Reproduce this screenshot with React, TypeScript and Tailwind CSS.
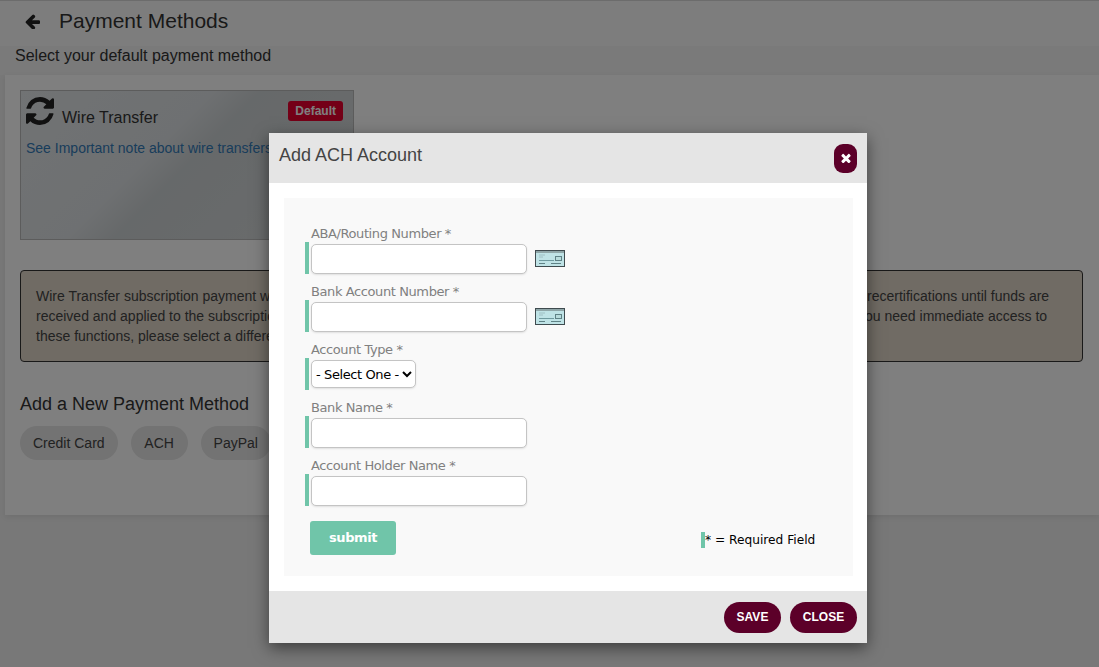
const labelFont = "font-['DejaVu_Sans',sans-serif]"

// Font Awesome 4 glyphs, the thicker shapes the page uses
function ArrowLeftIcon() {
  return (
    <svg viewBox="128 128 1536 1536" className="h-[15px] w-[15px] fill-[#222]">
      <path d="M1664 896v128q0 53-32.5 90.5t-84.5 37.5h-704l293 294q38 36 38 90t-38 90l-75 76q-37 37-90 37-52 0-91-37l-651-652q-37-37-37-90 0-52 37-91l651-650q38-38 91-38 52 0 90 38l75 74q38 38 38 91t-38 91l-293 293h704q52 0 84.5 37.5t32.5 90.5z" />
    </svg>
  )
}

function RefreshIcon() {
  return (
    <svg viewBox="128 128 1536 1536" className="h-7 w-7 shrink-0 fill-[#222]">
      <path d="M1639 1056q0 5-1 7-64 268-268 434.5t-478 166.5q-146 0-282.5-55t-243.5-157l-129 129q-19 19-45 19t-45-19-19-45v-448q0-26 19-45t45-19h448q26 0 45 19t19 45-19 45l-137 137q71 66 161 102t187 36q134 0 250-65t186-179q11-17 53-117 8-23 30-23h192q13 0 22.5 9.5t9.5 22.5zm25-800v448q0 26-19 45t-45 19h-448q-26 0-45-19t-19-45 19-45l138-138q-148-137-349-137-134 0-250 65t-186 179q-11 17-53 117-8 23-30 23h-199q-13 0-22.5-9.5t-9.5-22.5v-7q65-268 270-434.5t480-166.5q146 0 284 55.5t245 156.5l130-129q19-19 45-19t45 19 19 45z" />
    </svg>
  )
}

function TimesIcon() {
  return (
    <svg viewBox="256 256 1280 1280" className="h-2.5 w-2.5 fill-white">
      <path d="M1490 1322q0 40-28 68l-136 136q-28 28-68 28t-68-28l-294-294-294 294q-28 28-68 28t-68-28l-136-136q-28-28-28-68t28-68l294-294-294-294q-28-28-28-68t28-68l136-136q28-28 68-28t68 28l294 294 294-294q28-28 68-28t68 28l136 136q28 28 28 68t-28 68l-294 294 294 294q28 28 28 68z" />
    </svg>
  )
}

// little cheque picture next to the routing fields
function ChequeIcon() {
  return (
    <svg width="30" height="17" viewBox="0 0 30 17" className="ml-2 mt-2 shrink-0">
      <rect x="0.5" y="0.5" width="29" height="16" fill="#bfe3e6" stroke="#3f4b4f" />
      <rect x="1" y="1" width="28" height="2" fill="#8fa6a8" />
      <path d="M4 5h6M4 7h4" stroke="#9fc0c4" strokeWidth="1" />
      <path d="M4 10.5h15" stroke="#6f9a9f" strokeWidth="1" />
      <rect x="20.5" y="6.5" width="6" height="4" fill="#b8dcdc" stroke="#5f8286" />
      <path d="M4 13.5h6M16 13.5h10" stroke="#5f8286" strokeWidth="1" />
    </svg>
  )
}

function Label({ text }: { text: string }) {
  return (
    <div className={`${labelFont} ml-[27px] h-5 pt-1 text-[13px] leading-4 tracking-[-0.4px] text-[#808080]`}>{text}</div>
  )
}

function Field({ label, cheque }: { label: string; cheque?: boolean }) {
  return (
    <div className="h-[58px]">
      <Label text={label} />
      <div className="flex items-start">
        <div className="ml-[21px] h-8 w-1 bg-[#70c5a9]" />
        <input
          type="text"
          className="ml-0.5 mt-[2px] h-[30px] w-[216px] rounded-[5px] border border-[#c4c4c4] bg-white shadow-[0_1px_2px_rgba(0,0,0,0.1)]"
        />
        {cheque && <ChequeIcon />}
      </div>
    </div>
  )
}

export default function App() {
  return (
    <div className="relative h-[667px] w-[1099px] overflow-hidden bg-[#f0f0f0] font-['Liberation_Sans',sans-serif]">
      {/* page behind the dialog */}
      <div className="h-[52px] border-t border-[#d8d8d8] bg-[#fbfbfb]">
        <div className="flex items-center pl-[25px] pt-2">
          <ArrowLeftIcon />
          <h1 className="ml-[19px] text-[21px] leading-6 text-[#333]">Payment Methods</h1>
        </div>
      </div>
      <div className="-mt-[6px] h-[29px] bg-[#f4f4f4] pl-[15px] pt-px text-[16px] leading-[18px] text-[#333]">
        Select your default payment method
      </div>
      <div className="ml-[5px] h-[440px] bg-white px-[15px] pt-[15px] shadow-[0_2px_6px_rgba(0,0,0,0.08)]">
        <div className="relative h-[150px] w-[334px] border border-[#b8b8b8] bg-[linear-gradient(135deg,#e2e6e8_0%,#dde1e4_40%,#cdd2d4_50%,#d6d9da_100%)] px-[5px] pt-[6px]">
          <div className="flex items-start">
            <RefreshIcon />
            <span className="ml-2 mt-3 text-[16px] leading-[18px] text-[#333]">Wire Transfer</span>
          </div>
          <div className="mt-[13px] text-[14px] leading-4 text-[#337ab7]">See Important note about wire transfers</div>
          <span className="absolute right-[10px] top-[10px] rounded-[3px] bg-[#e8002f] px-[7px] py-[2px] text-[12px] font-bold leading-4 text-white">
            Default
          </span>
        </div>
        <div className="mt-[30px] h-[92px] w-[1063px] rounded-[4px] border border-[#333] bg-[#e0d6c8] px-[15px] pt-[15px] text-[14px] leading-[20px] text-[#444]">
          <div className="whitespace-nowrap">
            Wire Transfer subscription payment will delay access to subscription functions, including annual filings, reports, renewals, exports and recertifications until funds are
          </div>
          <div className="whitespace-nowrap">
            received and applied to the subscription. This process may take several business days to be completed fully by our staff and bank. If you need immediate access to
          </div>
          <div className="whitespace-nowrap">these functions, please select a different payment method.</div>
        </div>
        <h2 className="mt-[30px] text-[18px] leading-6 text-[#333]">Add a New Payment Method</h2>
        <div className="mt-[10px] flex gap-[13px] text-[14px] text-[#444]">
          <span className="flex h-[34px] items-center rounded-full bg-[#e6e6e6] px-[13px]">Credit Card</span>
          <span className="flex h-[34px] w-[57px] items-center justify-center rounded-full bg-[#e6e6e6]">ACH</span>
          <span className="flex h-[34px] items-center rounded-full bg-[#e6e6e6] px-[13px]">PayPal</span>
        </div>
      </div>

      {/* backdrop and dialog */}
      <div className="absolute inset-0 bg-black/50 pl-[269px] pt-[133px]">
        <div className="h-[510px] w-[598px] bg-white shadow-[0_5px_15px_rgba(0,0,0,0.5)]">
          <div className="flex h-[50px] items-center justify-between bg-[#e5e5e5] pl-[10px] pr-[10px]">
            <h3 className="-mt-[6px] text-[18px] text-[#444]">Add ACH Account</h3>
            <button className="flex h-[29px] w-[23px] items-center justify-center rounded-[9px] bg-[#5c0029]">
              <TimesIcon />
            </button>
          </div>
          <div className="h-[408px] px-[15px] pt-[15px]">
            <div className="h-[378px] w-[569px] bg-[#f9f9f9] pt-6">
              <Field label="ABA/Routing Number *" cheque />
              <Field label="Bank Account Number *" cheque />
              <div className="h-[58px]">
                <Label text="Account Type *" />
                <div className="flex items-start">
                  <div className="ml-[21px] h-8 w-1 bg-[#70c5a9]" />
                  <select className={`${labelFont} ml-0.5 mt-[2px] h-7 w-[105px] rounded-[5px] border border-[#c4c4c4] bg-white text-[13px] tracking-[-0.4px] text-black shadow-[0_1px_2px_rgba(0,0,0,0.1)]`}>
                    <option>- Select One -</option>
                  </select>
                </div>
              </div>
              <Field label="Bank Name *" />
              <Field label="Account Holder Name *" />
              <div className="ml-[26px] mt-[-1px] flex items-start">
                <button className={`${labelFont} mt-[10px] h-[34px] w-[86px] rounded-[3px] bg-[#70c5a9] text-[13px] font-bold tracking-[-0.4px] text-white`}>
                  submit
                </button>
                <div className={`${labelFont} ml-[305px] mt-[21px] flex h-4 items-center text-[12.2px] text-black`}>
                  <span className="h-4 w-1 bg-[#70c5a9]" />* = Required Field
                </div>
              </div>
            </div>
          </div>
          <div className="flex h-[52px] items-center justify-end gap-[9px] bg-[#e5e5e5] pr-[10px]">
            <button className="h-[31px] w-[57px] rounded-full bg-[#5c0029] text-[12px] font-bold text-white">SAVE</button>
            <button className="h-[31px] w-[67px] rounded-full bg-[#5c0029] text-[12px] font-bold text-white">CLOSE</button>
          </div>
        </div>
      </div>
    </div>
  )
}
